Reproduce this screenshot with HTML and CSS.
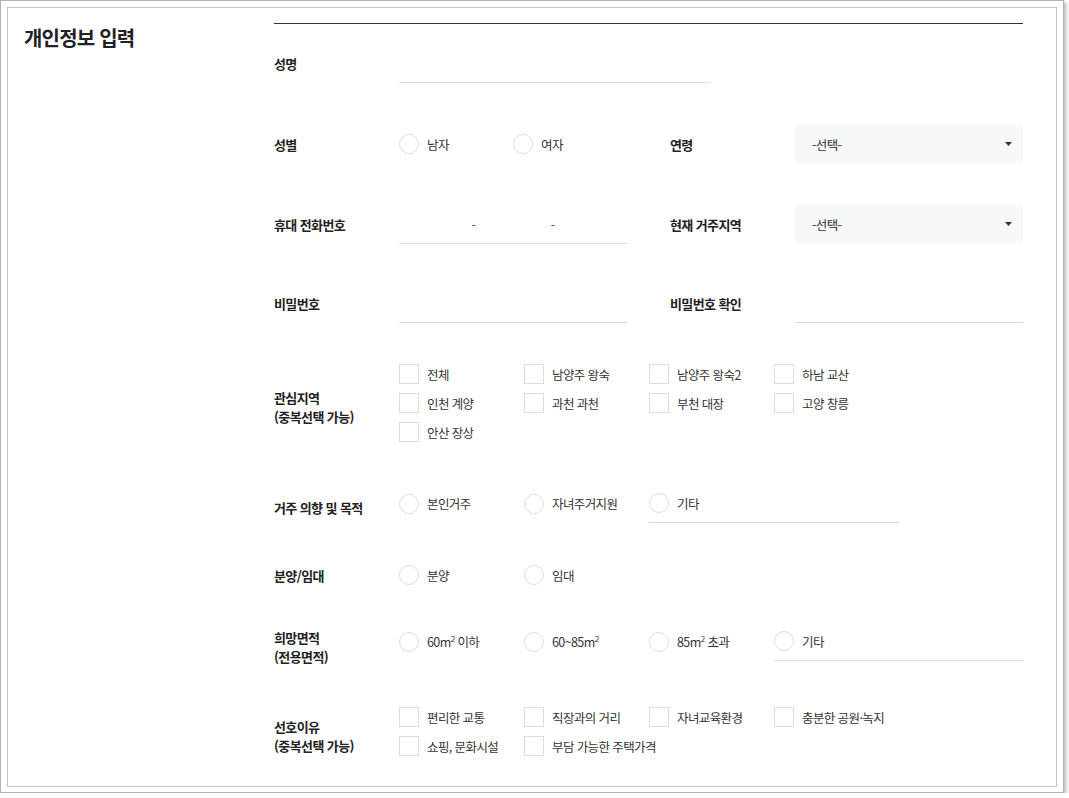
FILE: index.html
```html
<!DOCTYPE html>
<html lang="ko">
<head>
    <title>개인정보 입력</title>
    <meta charset="UTF-8">
    <link rel="stylesheet" href="styles.css">
</head>

<body>
    <div class="frame">
        <div class="inner">
            <div class="aside">
                <h2 class="title">개인정보 입력</h2>
            </div>

            <div class="form">
                <!-- 성명 -->
                <div class="row r1">
                    <div class="field wide">
                        <div class="label">성명</div>
                        <div class="control line name-box"><input type="text" class="txt"></div>
                    </div>
                </div>

                <!-- 성별 / 연령 -->
                <div class="row r2">
                    <div class="field">
                        <div class="label">성별</div>
                        <div class="control">
                            <label class="opt opt-sm"><span class="radio"></span><span>남자</span></label>
                            <label class="opt opt-sm"><span class="radio"></span><span>여자</span></label>
                        </div>
                    </div>
                    <div class="field">
                        <div class="label">연령</div>
                        <div class="control select">
                            <span>-선택-</span>
                            <svg class="caret" width="7" height="4" viewBox="0 0 7 4"><path d="M0 0h7L3.5 4z" fill="#333"/></svg>
                        </div>
                    </div>
                </div>

                <!-- 휴대 전화번호 / 현재 거주지역 -->
                <div class="row r3">
                    <div class="field">
                        <div class="label">휴대 전화번호</div>
                        <div class="control line phone">
                            <input type="text" class="txt">
                            <span class="dash">-</span>
                            <input type="text" class="txt">
                            <span class="dash">-</span>
                            <input type="text" class="txt">
                        </div>
                    </div>
                    <div class="field">
                        <div class="label">현재 거주지역</div>
                        <div class="control select">
                            <span>-선택-</span>
                            <svg class="caret" width="7" height="4" viewBox="0 0 7 4"><path d="M0 0h7L3.5 4z" fill="#333"/></svg>
                        </div>
                    </div>
                </div>

                <!-- 비밀번호 -->
                <div class="row r4">
                    <div class="field">
                        <div class="label">비밀번호</div>
                        <div class="control line"><input type="password" class="txt"></div>
                    </div>
                    <div class="field">
                        <div class="label">비밀번호 확인</div>
                        <div class="control line"><input type="password" class="txt"></div>
                    </div>
                </div>

                <!-- 관심지역 -->
                <div class="row r5">
                    <div class="field wide">
                        <div class="label">관심지역<br>(중복선택 가능)</div>
                        <div class="control grid">
                            <label class="opt"><span class="check"></span><span>전체</span></label>
                            <label class="opt"><span class="check"></span><span>남양주 왕숙</span></label>
                            <label class="opt"><span class="check"></span><span>남양주 왕숙2</span></label>
                            <label class="opt"><span class="check"></span><span>하남 교산</span></label>
                            <label class="opt"><span class="check"></span><span>인천 계양</span></label>
                            <label class="opt"><span class="check"></span><span>과천 과천</span></label>
                            <label class="opt"><span class="check"></span><span>부천 대장</span></label>
                            <label class="opt"><span class="check"></span><span>고양 창릉</span></label>
                            <label class="opt"><span class="check"></span><span>안산 장상</span></label>
                        </div>
                    </div>
                </div>

                <!-- 거주 의향 및 목적 -->
                <div class="row r6">
                    <div class="field wide">
                        <div class="label">거주 의향 및 목적</div>
                        <div class="control grid grid5">
                            <label class="opt tall"><span class="radio"></span><span>본인거주</span></label>
                            <label class="opt tall"><span class="radio"></span><span>자녀주거지원</span></label>
                            <label class="opt tall etc"><span class="radio"></span><span>기타</span></label>
                        </div>
                    </div>
                </div>

                <!-- 분양/임대 -->
                <div class="row r7">
                    <div class="field wide">
                        <div class="label">분양/임대</div>
                        <div class="control grid grid5">
                            <label class="opt tall"><span class="radio"></span><span>분양</span></label>
                            <label class="opt tall"><span class="radio"></span><span>임대</span></label>
                        </div>
                    </div>
                </div>

                <!-- 희망면적 -->
                <div class="row r8">
                    <div class="field wide">
                        <div class="label">희망면적<br>(전용면적)</div>
                        <div class="control grid grid5">
                            <label class="opt tall"><span class="radio"></span><span>60m<sup>2</sup> 이하</span></label>
                            <label class="opt tall"><span class="radio"></span><span>60~85m<sup>2</sup></span></label>
                            <label class="opt tall"><span class="radio"></span><span>85m<sup>2</sup> 초과</span></label>
                            <label class="opt tall etc"><span class="radio"></span><span>기타</span></label>
                        </div>
                    </div>
                </div>

                <!-- 선호이유 -->
                <div class="row r9">
                    <div class="field wide">
                        <div class="label">선호이유<br>(중복선택 가능)</div>
                        <div class="control grid">
                            <label class="opt"><span class="check"></span><span>편리한 교통</span></label>
                            <label class="opt"><span class="check"></span><span>직장과의 거리</span></label>
                            <label class="opt"><span class="check"></span><span>자녀교육환경</span></label>
                            <label class="opt"><span class="check"></span><span>충분한 공원·녹지</span></label>
                            <label class="opt"><span class="check"></span><span>쇼핑, 문화시설</span></label>
                            <label class="opt"><span class="check"></span><span>부담 가능한 주택가격</span></label>
                        </div>
                    </div>
                </div>
            </div>
        </div>
    </div>
</body>
</html>
```

FILE: styles.css
```css
body {
    margin: 0;
    background: #fff;
    font-family: "Noto Sans CJK KR", "Noto Sans", sans-serif;
    color: #222;
}

.frame {
    box-sizing: border-box;
    width: 1064px;
    height: 793px;
    padding: 6px;
    border: 1px solid #b4b4b4;
    box-shadow: 2px 2px 4px rgba(0, 0, 0, 0.3);
    background: #fff;
}

.inner {
    box-sizing: border-box;
    height: 780px;
    border: 1px solid #c6c6c6;
    display: flex;
}

.aside {
    width: 266px;
    flex: none;
}

.title {
    margin: 0;
    padding: 17px 0 0 16px;
    font-size: 20px;
    line-height: 26px;
    font-weight: 700;
    letter-spacing: -0.8px;
    color: #222;
}

.form {
    width: 749px;
    flex: none;
    padding-top: 15px;
}

.form::before {
    content: "";
    display: block;
    border-top: 1px solid #333;
}

.row {
    display: flex;
    align-items: flex-start;
    gap: 43px;
}

.r1 { margin-top: 20px; }
.r2 { margin-top: 42px; }
.r3 { margin-top: 42px; }
.r4 { margin-top: 40px; }
.r5 { margin-top: 41px; }
.r6 { margin-top: 42px; }
.r7 { margin-top: 33px; }
.r8 { margin-top: 28px; }
.r9 { margin-top: 41px; }

.field {
    display: flex;
    align-items: flex-start;
    width: 353px;
}

.field.wide {
    width: 749px;
}

.label {
    width: 125px;
    flex: none;
    padding-top: 10px;
    font-size: 13px;
    line-height: 19px;
    font-weight: 700;
    letter-spacing: -0.6px;
    color: #222;
}

.r5 .label { padding-top: 24px; }
.r6 .label { padding-top: 14px; }
.r8 .label { padding-top: 6px; }
.r9 .label { padding-top: 10px; }

.control {
    flex: 1;
    min-width: 0;
    height: 38px;
    display: flex;
    align-items: center;
    font-size: 12.5px;
    letter-spacing: -0.6px;
    color: #333;
}

.line {
    border-bottom: 1px solid #ddd;
}

.name-box {
    flex: none;
    width: 311px;
}

.txt {
    flex: 1;
    width: 0;
    min-width: 0;
    height: 100%;
    border: 0;
    padding: 0;
    background: transparent;
    outline: none;
}

.phone .dash {
    width: 10px;
    flex: none;
    text-align: center;
    color: #555;
}

.select {
    background: #f7f8fa;
    padding: 0 11px 0 17px;
    justify-content: space-between;
}

.opt {
    display: flex;
    align-items: center;
    gap: 8px;
    white-space: nowrap;
}

.opt-sm {
    width: 114px;
}

.radio {
    box-sizing: border-box;
    width: 20px;
    height: 20px;
    flex: none;
    border: 1px solid #ddd;
    border-radius: 50%;
    background: #fff;
}

.check {
    box-sizing: border-box;
    width: 20px;
    height: 20px;
    flex: none;
    border: 1px solid #ddd;
    background: #fff;
}

.grid {
    display: grid;
    grid-template-columns: repeat(4, 125px);
    row-gap: 9px;
    height: auto;
    align-items: center;
}

.grid5 {
    grid-template-columns: repeat(5, 125px);
}

.opt.tall {
    height: 38px;
}

.opt.etc {
    grid-column: span 2;
    border-bottom: 1px solid #ddd;
}

sup {
    font-size: 8px;
    line-height: 0;
    vertical-align: 5px;
}
```
